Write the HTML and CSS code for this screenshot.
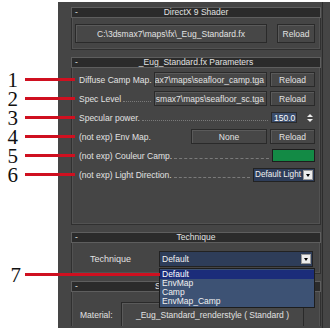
FILE: index.html
```html
<!DOCTYPE html>
<html>
<head>
<title>_Eug_Standard.fx Parameters</title>
<link rel="stylesheet" href="styles.css">
</head>
<body>
<div class="panel">
<div class="rollouts">

<div class="rollout">
<div class="rhead"><span class="minus">-</span><span class="rtitle">DirectX 9 Shader</span></div>
<div class="rbody shader">
<div class="btn path">C:\3dsmax7\maps\fx\_Eug_Standard.fx</div>
<div class="btn reload big">Reload</div>
</div>
</div>

<div class="rollout">
<div class="rhead"><span class="minus">-</span><span class="rtitle">_Eug_Standard.fx Parameters</span></div>
<div class="rbody params">
<div class="prow">
<span class="plabel"><span class="callout"><b>1</b><i></i></span>Diffuse Camp Map.</span>
<div class="btn file"><span>ax7\maps\seafloor_camp.tga</span></div>
<div class="btn reload">Reload</div>
</div>
<div class="prow">
<span class="plabel"><span class="callout"><b>2</b><i></i></span>Spec Level</span>
<span class="leader dots"></span>
<div class="btn file"><span>smax7\maps\seafloor_sc.tga</span></div>
<div class="btn reload">Reload</div>
</div>
<div class="prow">
<span class="plabel"><span class="callout"><b>3</b><i></i></span>Specular power.</span>
<span class="leader dots"></span>
<div class="spin">150.0</div>
<div class="arrows"><i class="up"></i><i class="down"></i></div>
</div>
<div class="prow">
<span class="plabel"><span class="callout"><b>4</b><i></i></span>(not exp) Env Map.</span>
<div class="btn none">None</div>
<div class="btn reload">Reload</div>
</div>
<div class="prow">
<span class="plabel"><span class="callout"><b>5</b><i></i></span>(not exp) Couleur Camp.</span>
<span class="leader"></span>
<div class="swatch"></div>
</div>
<div class="prow">
<span class="plabel"><span class="callout"><b>6</b><i></i></span>(not exp) Light Direction.</span>
<span class="leader"></span>
<div class="combo small"><span>Default Light</span><i class="drop"></i></div>
</div>
</div>
</div>

<div class="rollout">
<div class="rhead"><span class="minus">-</span><span class="rtitle">Technique</span></div>
<div class="rbody tech">
<span class="tlabel">Technique</span>
<div class="combo wide"><span>Default</span><i class="drop"></i>
<ul class="list">
<li class="sel"><span class="callout long"><b>7</b><i></i></span>Default</li>
<li>EnvMap</li>
<li>Camp</li>
<li>EnvMap_Camp</li>
</ul>
</div>
</div>
</div>

<div class="rollout last">
<div class="rhead"><span class="minus">-</span><span class="rtitle">Standard Renderstyle</span></div>
<div class="rbody material">
<span class="mlabel">Material:</span>
<div class="btn mfield">_Eug_Standard_renderstyle ( Standard )</div>
</div>
</div>

</div>
<div class="strip"></div>
</div>
</body>
</html>
```

FILE: styles.css
```css
body {
margin: 0;
background: #fff;
font-family: "Liberation Sans", Arial, sans-serif;
font-size: 8.5px;
color: #e2e2e2;
}
.panel {
display: flex;
margin: 2px 0 0 58px;
width: 272px;
height: 326px;
background: #454545;
}
.rollouts {
width: 250px;
margin-left: 13px;
padding-top: 5px;
}
.strip {
flex: 1;
margin-left: 1px;
border-left: 1px solid #2c2c2c;
}
.rollout { margin-bottom: 7px; }
.rollout.last { margin-bottom: 0; }
.rhead {
position: relative;
height: 11px;
box-sizing: border-box;
border: 1px solid #5e5e5e;
background: #2b2b2b;
line-height: 9px;
text-align: center;
}
.minus {
position: absolute;
left: 3px;
top: 0;
}
.rbody {
border: 1px solid #303030;
border-top: none;
box-shadow: inset 1px 0 0 #525252, inset -1px -1px 0 #525252;
}
.btn {
box-sizing: border-box;
border: 1px solid #2a2a2a;
box-shadow: inset 1px 1px 0 #5a5a5a;
background: #474747;
display: flex;
align-items: center;
justify-content: center;
white-space: nowrap;
overflow: hidden;
flex-shrink: 0;
}

/* DirectX 9 Shader */
.shader {
display: flex;
padding: 6px 5px 6px 3px;
}
.path { width: 192px; height: 19px; }
.reload.big { width: 38px; height: 19px; margin-left: 10px; }

/* parameters */
.params { padding: 2px 5px 40px 7px; }
.prow {
display: flex;
align-items: center;
height: 19px;
}
.plabel {
position: relative;
white-space: nowrap;
}
.leader {
flex: 1;
align-self: flex-end;
margin: 0 3px 6px 2px;
border-bottom: 1px dashed #7a7a7a;
}
.leader.dots { border-bottom-style: dotted; }
.file {
width: 113px;
height: 15px;
margin-left: auto;
justify-content: flex-end;
padding-right: 2px;
}
.prow .leader + .file { margin-left: 0; }
.reload { width: 45px; height: 15px; margin-left: 3px; }
.none { width: 76px; height: 15px; margin-left: auto; }
.spin {
width: 26px;
height: 11px;
box-sizing: border-box;
padding-left: 2px;
line-height: 10px;
background: #3b4d6c;
color: #fff;
border: 1px solid #2b2b2b;
flex-shrink: 0;
}
.arrows {
display: flex;
flex-direction: column;
gap: 2px;
width: 7px;
margin: 0 1px 0 10px;
}
.arrows i {
width: 0;
height: 0;
border-left: 3px solid transparent;
border-right: 3px solid transparent;
}
.arrows .up { border-bottom: 3px solid #eee; }
.arrows .down { border-top: 3px solid #eee; }
.swatch {
width: 43px;
height: 13px;
box-sizing: border-box;
border: 1px solid #1d1d1d;
background: #138a45;
flex-shrink: 0;
}
.combo {
position: relative;
display: flex;
align-items: center;
box-sizing: border-box;
background: #2e3d59;
border: 1px solid #222;
color: #f2f2f2;
padding-left: 1px;
flex-shrink: 0;
}
.combo span { flex: 1; white-space: nowrap; }
.combo.small { width: 62px; height: 14px; font-size: 8.2px; }
.drop {
width: 10px;
height: 10px;
margin-right: 1px;
box-sizing: border-box;
background: #ececec;
border: 1px solid #999;
position: relative;
flex-shrink: 0;
}
.drop::after {
content: "";
position: absolute;
left: 2px;
top: 3px;
border-left: 2px solid transparent;
border-right: 2px solid transparent;
border-top: 3px solid #000;
}

/* technique */
.tech {
display: flex;
align-items: center;
padding: 8px 7px 6px 18px;
}
.tlabel { font-size: 9px; }
.combo.wide {
width: 154px;
height: 16px;
margin-left: auto;
padding-left: 2px;
}
.list {
position: absolute;
left: -1px;
top: 16px;
width: 154px;
margin: 0;
padding: 1px 0;
list-style: none;
background: #3d5274;
border: 1px solid #1d1d1d;
z-index: 2;
}
.list li {
position: relative;
height: 9px;
line-height: 9px;
padding-left: 2px;
color: #f0f0f0;
}
.list .sel { background: #1b2c7a; color: #fff; }

/* material */
.material {
display: flex;
align-items: flex-start;
padding: 10px 6px 0 8px;
height: 24px;
border-bottom: none;
box-shadow: inset 1px 0 0 #525252, inset -1px 0 0 #525252;
}
.mlabel { width: 41px; margin-top: 8px; }
.mfield { width: 183px; height: 24px; border-bottom: none; }

/* numbered callouts */
.callout {
position: absolute;
right: calc(100% + 4px);
top: 50%;
transform: translateY(-50%);
display: flex;
align-items: center;
}
.callout b {
font: normal 21px/16px "Liberation Serif", "Times New Roman", serif;
color: #111;
}
.callout i {
width: 50px;
height: 3px;
margin-left: 7px;
background: #cf1020;
}
.callout.long { right: 100%; }
.callout.long i { width: 135px; margin-left: 4px; }
```
